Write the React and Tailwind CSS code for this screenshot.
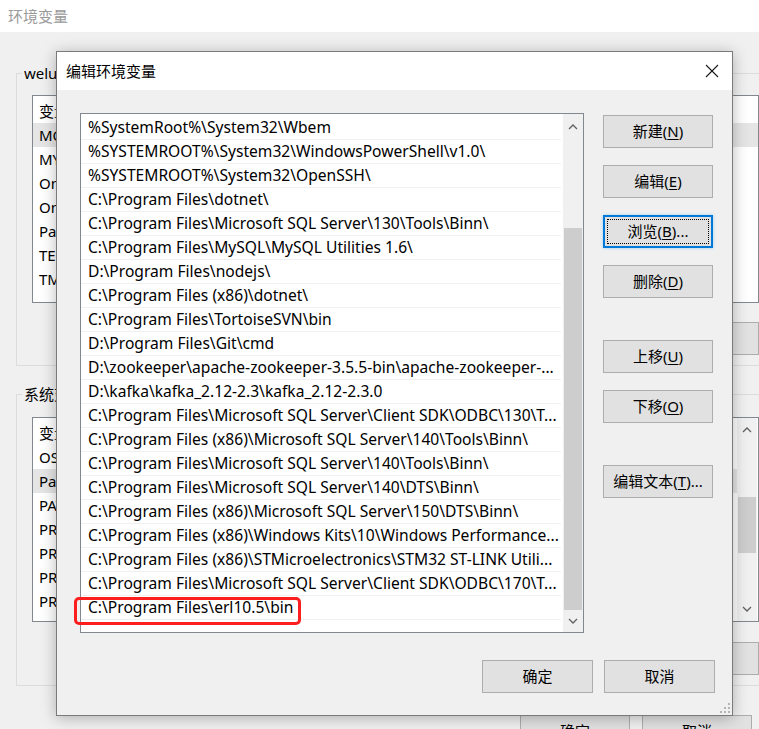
import React from 'react';

const paths = [
  '%SystemRoot%\\System32\\Wbem',
  '%SYSTEMROOT%\\System32\\WindowsPowerShell\\v1.0\\',
  '%SYSTEMROOT%\\System32\\OpenSSH\\',
  'C:\\Program Files\\dotnet\\',
  'C:\\Program Files\\Microsoft SQL Server\\130\\Tools\\Binn\\',
  'C:\\Program Files\\MySQL\\MySQL Utilities 1.6\\',
  'D:\\Program Files\\nodejs\\',
  'C:\\Program Files (x86)\\dotnet\\',
  'C:\\Program Files\\TortoiseSVN\\bin',
  'D:\\Program Files\\Git\\cmd',
  'D:\\zookeeper\\apache-zookeeper-3.5.5-bin\\apache-zookeeper-...',
  'D:\\kafka\\kafka_2.12-2.3\\kafka_2.12-2.3.0',
  'C:\\Program Files\\Microsoft SQL Server\\Client SDK\\ODBC\\130\\T...',
  'C:\\Program Files (x86)\\Microsoft SQL Server\\140\\Tools\\Binn\\',
  'C:\\Program Files\\Microsoft SQL Server\\140\\Tools\\Binn\\',
  'C:\\Program Files\\Microsoft SQL Server\\140\\DTS\\Binn\\',
  'C:\\Program Files (x86)\\Microsoft SQL Server\\150\\DTS\\Binn\\',
  'C:\\Program Files (x86)\\Windows Kits\\10\\Windows Performance...',
  'C:\\Program Files (x86)\\STMicroelectronics\\STM32 ST-LINK Utili...',
  'C:\\Program Files\\Microsoft SQL Server\\Client SDK\\ODBC\\170\\T...',
  'C:\\Program Files\\erl10.5\\bin',
];

const userVars = [
  ['MOZ_PLUGIN_PATH', true],
  ['MYSQL_HOME', false],
  ['OneDrive', false],
  ['OneDriveConsumer', false],
  ['Path', false],
  ['TEMP', false],
  ['TMP', false],
];

const sysVars = [
  ['OS', false],
  ['Path', true],
  ['PATHEXT', false],
  ['PROCESSOR_ARCHITECTURE', false],
  ['PROCESSOR_IDENTIFIER', false],
  ['PROCESSOR_LEVEL', false],
  ['PROCESSOR_REVISION', false],
  ['PSModulePath', false],
];

const Chevron = ({ down }) => (
  <svg width="10" height="6" viewBox="0 0 10 6" fill="none" stroke="#606060" strokeWidth="1.3">
    {down ? <polyline points="1,1 5,5 9,1" /> : <polyline points="1,5 5,1 9,5" />}
  </svg>
);

// windows style push button, key letter gets underlined
const WinButton = ({ pre, mn, post = '', focus, className = '' }) => (
  <div
    className={`relative h-[33px] w-[110px] flex items-center justify-center bg-[#e1e1e1] text-[15px] text-black ${
      focus ? 'border-2 border-[#0078d7] shadow-[0_0_3px_#9fd0f5]' : 'border border-[#adadad]'
    } ${className}`}
  >
    {focus && <span className="absolute inset-[2px] border border-dotted border-black" />}
    <span>
      {pre}
      {mn && <span className="underline underline-offset-2">{mn}</span>}
      {post}
    </span>
  </div>
);

const App = () => {
  return (
    <div className="relative w-[759px] h-[729px] overflow-hidden bg-[#f0f0f0] font-['Noto_Sans','Noto_Sans_CJK_SC',sans-serif] text-black">
      {/* background window: 环境变量 */}
      <div className="h-[32px] bg-white pl-[8px] flex items-center text-[15px] text-[#9a9a9a]">环境变量</div>

      <div className="pl-[16px] pt-[31px] w-[800px]">
        <fieldset className="border border-[#dcdcdc] px-[15px] pb-[10px] w-[774px]">
          <legend className="-ml-[10px] px-[2px] text-[15px] leading-[20px]">welu的用户变量(U)</legend>
          <div className="mt-[12px] h-[208px] w-[727px] border border-[#828790] bg-white pt-[3px]">
            <div className="h-[24px] leading-[24px] pl-[6px] text-[15px]">变量</div>
            {userVars.map(([name, sel]) => (
              <div key={name} className={`h-[24px] leading-[24px] pl-[6px] text-[15px] ${sel ? 'bg-[#e5e5e5]' : ''}`}>
                {name}
              </div>
            ))}
          </div>
          <div className="mt-[19px] w-[727px] flex justify-end gap-[12px]">
            <WinButton pre="新建(" mn="N" post=")..." />
            <WinButton pre="编辑(" mn="E" post=")..." />
            <WinButton pre="删除(" mn="D" post=")" />
          </div>
        </fieldset>

        <fieldset className="mt-[18px] border border-[#dcdcdc] px-[15px] pb-[10px] w-[774px]">
          <legend className="-ml-[10px] px-[2px] text-[15px] leading-[20px]">系统变量(S)</legend>
          <div className="mt-[13px] h-[205px] w-[727px] border border-[#828790] bg-white flex overflow-hidden">
            <div className="flex-1 pt-[3px]">
              <div className="h-[24px] leading-[24px] pl-[6px] text-[15px]">变量</div>
              {sysVars.map(([name, sel]) => (
                <div key={name} className={`h-[24px] leading-[24px] pl-[6px] text-[15px] ${sel ? 'bg-[#e5e5e5]' : ''}`}>
                  {name}
                </div>
              ))}
            </div>
            <div className="w-[20px] bg-[#f0f0f0] flex flex-col items-center mr-[1px]">
              <div className="h-[24px] flex items-center"><Chevron /></div>
              <div className="h-[55px]" />
              <div className="h-[56px] w-[18px] bg-[#cdcdcd]" />
              <div className="flex-1" />
              <div className="h-[24px] flex items-center"><Chevron down /></div>
            </div>
          </div>
          <div className="mt-[20px] w-[727px] flex justify-end gap-[12px]">
            <WinButton pre="新建(" mn="W" post=")..." />
            <WinButton pre="编辑(" mn="I" post=")..." />
            <WinButton pre="删除(" mn="L" post=")" />
          </div>
        </fieldset>

        <div className="mt-[29px] flex gap-[12px] pl-[504px]">
          <WinButton pre="确定" />
          <WinButton pre="取消" />
        </div>
      </div>

      {/* dialog window: 编辑环境变量 */}
      <div className="absolute left-[56px] top-[51px] w-[677px] h-[665px] border border-[#7a7a7a] bg-[#f0f0f0] shadow-[0_2px_14px_rgba(0,0,0,0.28)] flex flex-col">
        <div className="h-[38px] bg-white flex items-center justify-between pl-[9px] pr-[13px]">
          <span className="text-[15px]">编辑环境变量</span>
          <svg width="14" height="14" viewBox="0 0 14 14" stroke="#1a1a1a" strokeWidth="1.1">
            <line x1="1" y1="1" x2="13" y2="13" />
            <line x1="13" y1="1" x2="1" y2="13" />
          </svg>
        </div>

        <div className="flex-1 relative flex flex-col pl-[23px] pr-[17px] pt-[23px]">
          <div className="flex">
            <div className="w-[504px] h-[520px] border border-[#828790] bg-white flex">
              <div className="flex-1 min-w-0 pt-[2px]">
                {paths.map((p, i) => (
                  <div
                    key={i}
                    className="relative h-[24px] leading-[23px] pl-[7px] mr-[2px] border-b border-[#f0f0f0] text-[15.6px]"
                  >
                    <div className="whitespace-nowrap overflow-hidden text-ellipsis">{p}</div>
                    {i === paths.length - 1 && (
                      <span className="absolute left-[-7px] top-[1px] w-[227px] h-[28px] border-[3px] border-[#ff1e1e] rounded-[5px]" />
                    )}
                  </div>
                ))}
              </div>
              <div className="w-[20px] bg-[#f0f0f0] flex flex-col items-center">
                <div className="h-[26px] flex items-center"><Chevron /></div>
                <div className="h-[88px]" />
                <div className="h-[382px] w-[18px] bg-[#cdcdcd]" />
                <div className="flex-1" />
                <div className="h-[22px] flex items-center"><Chevron down /></div>
              </div>
            </div>

            <div className="ml-[19px] pt-[2px] flex flex-col">
              <WinButton pre="新建(" mn="N" post=")" />
              <WinButton pre="编辑(" mn="E" post=")" className="mt-[17px]" />
              <WinButton pre="浏览(" mn="B" post=")..." focus className="mt-[17px]" />
              <WinButton pre="删除(" mn="D" post=")" className="mt-[17px]" />
              <WinButton pre="上移(" mn="U" post=")" className="mt-[42px]" />
              <WinButton pre="下移(" mn="O" post=")" className="mt-[17px]" />
              <WinButton pre="编辑文本(" mn="T" post=")..." className="mt-[42px]" />
            </div>
          </div>

          <div className="mt-[27px] flex justify-end gap-[11px]">
            <WinButton pre="确定" className="w-[111px]" />
            <WinButton pre="取消" className="w-[111px]" />
          </div>

          {/* size grip */}
          <svg className="absolute right-[2px] bottom-[2px]" width="10" height="10" viewBox="0 0 10 10" fill="#b5b5b5">
            <rect x="8" y="0" width="2" height="2" />
            <rect x="4" y="4" width="2" height="2" />
            <rect x="8" y="4" width="2" height="2" />
            <rect x="0" y="8" width="2" height="2" />
            <rect x="4" y="8" width="2" height="2" />
            <rect x="8" y="8" width="2" height="2" />
          </svg>
        </div>
      </div>
    </div>
  );
};

export default App;
